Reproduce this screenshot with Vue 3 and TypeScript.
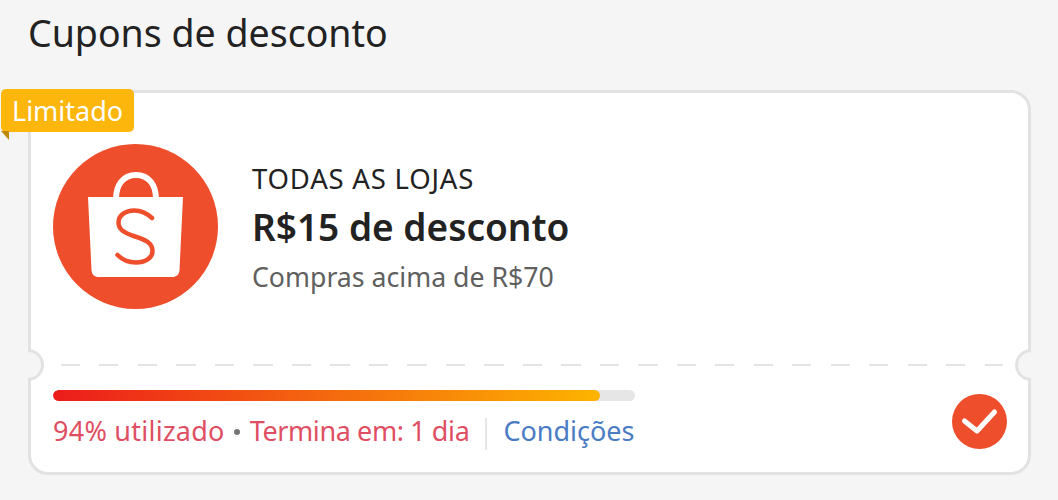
<script setup lang="ts">
const usedPercent = 94
</script>

<template>
  <div class="page">
    <h1 class="title">Cupons de desconto</h1>

    <div class="coupon">
      <div class="tag">Limitado</div>
      <span class="notch notch-left" />
      <span class="notch notch-right" />

      <div class="coupon-top">
        <svg class="logo" viewBox="0 0 165 165" aria-hidden="true">
          <circle cx="82.5" cy="82.5" r="82.5" fill="#ee4e2c" />
          <path
            d="M63 55 C63 41 70 31 83 31 C96 31 103 41 103 55"
            fill="none"
            stroke="#fff"
            stroke-width="6"
          />
          <path
            d="M35 53 H130 L126.500 126 C126.300 130.500 123.500 133 119 133 H46 C41.500 133 38.700 130.500 38.500 126 Z"
            fill="#fff"
          />
          <path
            d="M99 74 C93.500 69 88 66.500 81.500 66.500 C72 66.500 65.500 71.500 65.500 78.500 C65.500 85.500 71 89 82 92.500 C93.500 96 99.500 99.500 99.500 107 C99.500 114 92 118.500 83 118.500 C75.500 118.500 70 116.500 64.500 111"
            fill="none"
            stroke="#ee4e2c"
            stroke-width="4.500"
            stroke-linecap="round"
          />
        </svg>

        <div class="info">
          <div class="scope">TODAS AS LOJAS</div>
          <div class="discount">R$15 de desconto</div>
          <div class="minimum">Compras acima de R$70</div>
        </div>
      </div>

      <div class="divider" />

      <div class="coupon-bottom">
        <div class="usage">
          <div class="bar">
            <div class="bar-fill" :style="{ width: `${usedPercent}%` }" />
          </div>
          <div class="meta">
            <span class="warn used">{{ usedPercent }}% utilizado</span>
            <span class="dot" />
            <span class="warn ends">Termina em: 1 dia</span>
            <span class="sep" />
            <span class="link">Condições</span>
          </div>
        </div>

        <svg class="check" viewBox="0 0 55 55" aria-hidden="true">
          <circle cx="27.500" cy="27.500" r="27.500" fill="#ee4e2c" />
          <path
            d="M12.500 27 L25 37 L42.500 18"
            fill="none"
            stroke="#fff"
            stroke-width="5"
            stroke-linecap="round"
            stroke-linejoin="round"
          />
        </svg>
      </div>
    </div>
  </div>
</template>

<style>
html,
body {
  background: #f5f5f5;
}
</style>

<style scoped>
.page {
  width: 1058px;
  height: 500px;
  box-sizing: border-box;
  padding: 10px 27px 0 28px;
  background: #f5f5f5;
  font-family: "Noto Sans", sans-serif;
  overflow: hidden;
}

.title {
  margin: 0 0 28px;
  height: 52px;
  line-height: 46px;
  font-size: 37.500px;
  font-weight: 400;
  color: #222;
}

.coupon {
  position: relative;
  height: 385px;
  box-sizing: border-box;
  border: 3px solid #e2e2e2;
  border-radius: 20px;
  background: #fff;
  display: flex;
  flex-direction: column;
}

.tag {
  position: absolute;
  left: -30px;
  top: -4px;
  width: 133px;
  height: 43px;
  box-sizing: border-box;
  padding-left: 11px;
  border-radius: 5px;
  background: #fcb60c;
  color: #fff;
  font-size: 27px;
  line-height: 43px;
}

.tag::after {
  content: "";
  position: absolute;
  left: 0;
  top: 42px;
  border-top: 9px solid #c08a08;
  border-left: 8px solid transparent;
}

.notch {
  position: absolute;
  top: 256px;
  width: 32px;
  height: 32px;
  box-sizing: border-box;
  border: 3px solid #e2e2e2;
  border-radius: 50%;
  background: #f5f5f5;
}

.notch-left {
  left: -19px;
  clip-path: inset(0 0 0 16px);
}

.notch-right {
  right: -19px;
  clip-path: inset(0 16px 0 0);
}

.coupon-top {
  height: 271px;
  box-sizing: border-box;
  padding: 51px 0 0 22px;
  display: flex;
  align-items: flex-start;
  gap: 34px;
}

.logo {
  width: 165px;
  height: 165px;
  flex: none;
}

.info {
  padding-top: 18px;
  display: flex;
  flex-direction: column;
}

.scope {
  height: 34px;
  line-height: 34px;
  font-size: 27.500px;
  letter-spacing: 0.800px;
  color: #222;
}

.discount {
  height: 62px;
  line-height: 62px;
  font-size: 37px;
  font-weight: 600;
  color: #222;
}

.minimum {
  height: 38px;
  line-height: 38px;
  font-size: 26.700px;
  color: #5f5f5f;
}

.divider {
  margin: 0 0 0 30px;
  height: 1.500px;
  width: 942px;
  background: repeating-linear-gradient(90deg, #e4e4e4 0 19px, transparent 19px 38.500px);
}

.coupon-bottom {
  flex: 1;
  box-sizing: border-box;
  padding: 24px 21px 0 22px;
  display: flex;
  justify-content: space-between;
  align-items: flex-start;
}

.usage {
  width: 582px;
}

.bar {
  height: 11px;
  border-radius: 6px;
  background: #e6e6e6;
  overflow: hidden;
}

.bar-fill {
  height: 100%;
  border-radius: 6px;
  background: linear-gradient(90deg, #ec1c1c, #fdb400);
}

.meta {
  margin-top: 11px;
  height: 38px;
  display: flex;
  align-items: center;
  font-size: 27px;
  white-space: nowrap;
}

.warn {
  color: #df4f63;
}

.used {
  letter-spacing: 0.250px;
}

.ends {
  letter-spacing: -0.400px;
}

.dot {
  flex: none;
  width: 6px;
  height: 6px;
  margin: 3px 10px 0 9px;
  border-radius: 50%;
  background: #757575;
}

.sep {
  flex: none;
  width: 2px;
  height: 32px;
  margin: 6px 16px 0 16px;
  background: #e6e6e6;
}

.link {
  color: #4a7cc4;
}

.check {
  width: 55px;
  height: 55px;
  margin-top: 4px;
  flex: none;
}
</style>
